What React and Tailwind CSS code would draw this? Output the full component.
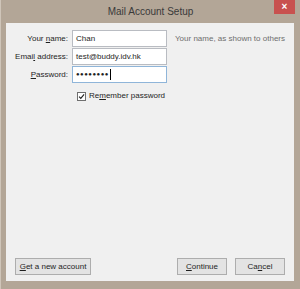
import React from "react"

const U = ({ children }) => <span className="underline underline-offset-1">{children}</span>

const Field = ({ label, children, focused }) => (
  <>
    <div className="text-right text-[#1e1e1e] leading-[17px] whitespace-nowrap">{label}</div>
    <div
      className={
        "h-[17px] bg-white border px-[3px] flex items-center text-[#1e1e1e] " +
        (focused ? "border-[#8fb5d9]" : "border-[#b9bcc2]")
      }
    >
      {children}
    </div>
  </>
)

const Button = ({ children, className = "" }) => (
  <button
    className={
      "h-[17px] bg-[#e3e3e3] border border-[#adadad] text-[#1e1e1e] flex items-center justify-center leading-none whitespace-nowrap " +
      className
    }
  >
    {children}
  </button>
)

export default function App() {
  return (
    <div
      className="w-[300px] h-[289px] bg-[#b3a697] flex flex-col border-l border-[#cfc5b9] text-[8px]"
      style={{ fontFamily: '"Liberation Sans", Arial, sans-serif' }}
    >
      {/* title bar */}
      <div className="relative h-[23px] shrink-0 flex items-center justify-center">
        <span className="text-[10px] text-[#3a3a3a] -mt-[1px]">Mail Account Setup</span>
        <div className="absolute right-[5px] top-0 w-[21px] h-[14px] bg-[#c8514f] flex items-center justify-center text-white text-[10px] font-bold leading-none">
          ×
        </div>
      </div>

      {/* client area */}
      <div className="flex-1 ml-[5px] mr-[6px] mb-[8px] bg-[#f0f0f0] flex flex-col">
        <div className="pt-[7px] grid grid-cols-[62px_95px_1fr] gap-x-[4px] gap-y-[1px] items-center">
          <Field label={<>Your <U>n</U>ame:</>}>Chan</Field>
          <div className="pl-[4px] text-[#6e6e6e] whitespace-nowrap">Your name, as shown to others</div>
          <Field label={<>Emai<U>l</U> address:</>}>test@buddy.idv.hk</Field>
          <div />
          <Field label={<><U>P</U>assword:</>} focused>
            <span className="text-[6px] tracking-[0.5px]">●●●●●●●●</span>
            <span className="w-px h-[11px] bg-black ml-[1px]" />
          </Field>
          <div />
        </div>

        <label className="mt-[7px] ml-[71px] flex items-center gap-[3px] text-[#1e1e1e]">
          <span className="w-[9px] h-[9px] bg-white border border-[#6f6f6f] flex items-center justify-center">
            <svg viewBox="0 0 10 10" className="w-[7px] h-[7px]">
              <path d="M1.5 5.2 L4 7.8 L8.7 2" fill="none" stroke="#222" strokeWidth="1.6" />
            </svg>
          </span>
          <span>Re<U>m</U>ember password</span>
        </label>

        <div className="mt-auto px-[9px] pb-[6px] flex items-center">
          <Button className="w-[76px]"><span><U>G</U>et a new account</span></Button>
          <div className="flex-1" />
          <Button className="w-[50px]"><span><U>C</U>ontinue</span></Button>
          <Button className="w-[50px] ml-[8px]"><span>Ca<U>n</U>cel</span></Button>
        </div>
      </div>
    </div>
  )
}
